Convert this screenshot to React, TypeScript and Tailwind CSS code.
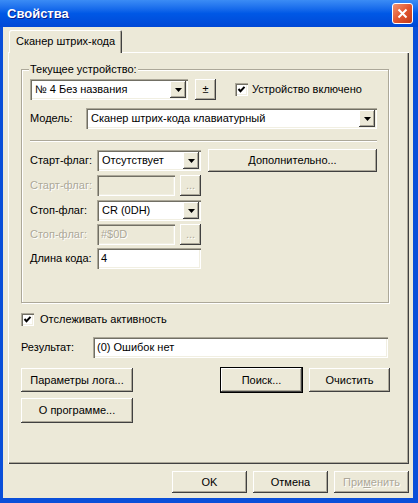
const raised =
  "bg-[#ece9d8] shadow-[inset_-1px_-1px_0_#404040,inset_1px_1px_0_#fff,inset_-2px_-2px_0_#aca899]";
const sunken =
  "shadow-[inset_1px_1px_0_#aca899,inset_2px_2px_0_#716f64,inset_-1px_-1px_0_#fff,inset_-2px_-2px_0_#f1efe2]";
const disabledText = "text-[#aca899] [text-shadow:1px_1px_0_#fff]";

function Arrow() {
  return (
    <div className={`ml-auto mr-[2px] w-[16px] h-[17px] flex items-center justify-center ${raised}`}>
      <svg width="7" height="4" viewBox="0 0 7 4">
        <path d="M0 0h7L3.5 4z" fill="#000" />
      </svg>
    </div>
  );
}

function Combo({ value, width }: { value: string; width: string }) {
  return (
    <div className={`${width} h-[21px] bg-white flex items-center pl-[5px] ${sunken}`}>
      <span className="leading-none">{value}</span>
      <Arrow />
    </div>
  );
}

function Field({ value, width, disabled }: { value: string; width: string; disabled?: boolean }) {
  return (
    <div
      className={`${width} h-[21px] flex items-center pl-[4px] ${sunken} ${
        disabled ? "bg-[#ece9d8] " + disabledText : "bg-white"
      }`}
    >
      {value}
    </div>
  );
}

function Button({
  children,
  width,
  height = "h-[23px]",
  isDefault,
  disabled,
}: {
  children: React.ReactNode;
  width: string;
  height?: string;
  isDefault?: boolean;
  disabled?: boolean;
}) {
  return (
    <div
      className={`${width} ${height} flex items-center justify-center ${raised} ${
        isDefault ? "outline outline-1 outline-black" : ""
      } ${disabled ? disabledText : ""}`}
    >
      {children}
    </div>
  );
}

function Check() {
  return (
    <div className={`w-[13px] h-[13px] bg-white flex items-center justify-center ${sunken}`}>
      <svg width="9" height="9" viewBox="0 0 9 9">
        <path d="M1.5 4l2 2.2L7.5 1.8" stroke="#000" strokeWidth="2" fill="none" />
      </svg>
    </div>
  );
}

export default function App() {
  return (
    <div className="w-[418px] h-[503px] flex flex-col bg-[#0a4fd9] font-['Liberation_Sans',Arial,sans-serif] text-[11px] text-black">
      {/* title bar */}
      <div className="h-[27px] flex items-center pl-[7px] pr-[5px] bg-gradient-to-b from-[#3b8cf5] via-[#0058e6] to-[#0048d6]">
        <span className="text-white font-bold text-[13px] [text-shadow:1px_1px_0_#0a1e8c]">Свойства</span>
        <div className="ml-auto w-[21px] h-[21px] rounded-[3px] border border-white bg-gradient-to-br from-[#f0926f] via-[#e2562f] to-[#c13a18] flex items-center justify-center">
          <svg width="11" height="11" viewBox="0 0 11 11">
            <path d="M1.5 1.5l8 8M9.5 1.5l-8 8" stroke="#fff" strokeWidth="2" />
          </svg>
        </div>
      </div>

      {/* body */}
      <div className="flex-1 ml-[3px] mr-[5px] mb-[5px] bg-[#ece9d8] flex flex-col">
        <div className="mt-[3px] ml-[6px] flex">
          <div className="relative z-10 w-[113px] h-[23px] -mb-[1px] bg-[#ece9d8] rounded-t-[2px] shadow-[inset_1px_1px_0_#fff,inset_-1px_0_0_#404040,inset_-2px_0_0_#aca899] flex items-center justify-center pb-[1px]">
            Сканер штрих-кода
          </div>
        </div>

        {/* tab panel */}
        <div className="ml-[5px] w-[401px] h-[412px] flex flex-col pl-[13px] shadow-[inset_1px_1px_0_#fff,inset_-1px_-1px_0_#404040,inset_-2px_-2px_0_#aca899]">
          {/* group box */}
          <div className="relative mt-[17px] w-[368px] h-[234px] border border-[#aca899] shadow-[1px_1px_0_#fff,inset_1px_1px_0_#fff] pl-[8px] pt-[9px] flex flex-col">
            <span className="absolute left-[7px] -top-[8px] px-[1px] bg-[#ece9d8] leading-[14px]">
              Текущее устройство:
            </span>

            <div className="flex items-center h-[21px]">
              <Combo value="№ 4 Без названия" width="w-[158px]" />
              <div className="ml-[7px]">
                <Button width="w-[21px]" height="h-[21px]">±</Button>
              </div>
              <div className="ml-[19px]">
                <Check />
              </div>
              <span className="ml-[4px]">Устройство включено</span>
            </div>

            <div className="mt-[8px] flex items-center h-[21px]">
              <span className="w-[56px]">Модель:</span>
              <Combo value="Сканер штрих-кода клавиатурный" width="w-[291px]" />
            </div>

            <div className="mt-[11px] w-[347px] border-t border-t-[#aca899] border-b border-b-white" />

            <div className="mt-[8px] flex items-center h-[21px]">
              <span className="w-[67px]">Старт-флаг:</span>
              <Combo value="Отсутствует" width="w-[104px]" />
              <div className="ml-[7px]">
                <Button width="w-[169px]">Дополнительно...</Button>
              </div>
            </div>

            <div className="mt-[4px] flex items-center h-[21px]">
              <span className={`w-[67px] ${disabledText}`}>Старт-флаг:</span>
              <Field value="" width="w-[78px]" disabled />
              <div className="ml-[5px]">
                <Button width="w-[21px]" height="h-[21px]" disabled>...</Button>
              </div>
            </div>

            <div className="mt-[4px] flex items-center h-[21px]">
              <span className="w-[67px]">Стоп-флаг:</span>
              <Combo value="CR (0DH)" width="w-[104px]" />
            </div>

            <div className="mt-[3px] flex items-center h-[21px]">
              <span className={`w-[67px] ${disabledText}`}>Стоп-флаг:</span>
              <Field value="#$0D" width="w-[78px]" disabled />
              <div className="ml-[5px]">
                <Button width="w-[21px]" height="h-[21px]" disabled>...</Button>
              </div>
            </div>

            <div className="mt-[3px] flex items-center h-[21px]">
              <span className="w-[67px]">Длина кода:</span>
              <Field value="4" width="w-[104px]" />
            </div>
          </div>

          <div className="mt-[10px] flex items-center h-[13px]">
            <Check />
            <span className="ml-[6px]">Отслеживать активность</span>
          </div>

          <div className="mt-[11px] flex items-center h-[21px]">
            <span className="w-[72px]">Результат:</span>
            <Field value="(0) Ошибок нет" width="w-[295px]" />
          </div>

          <div className="mt-[10px] flex items-center">
            <Button width="w-[112px]" height="h-[24px]">Параметры лога...</Button>
            <div className="ml-[88px]">
              <Button width="w-[81px]" height="h-[24px]" isDefault>Поиск...</Button>
            </div>
            <div className="ml-[7px]">
              <Button width="w-[81px]" height="h-[24px]">Очистить</Button>
            </div>
          </div>

          <div className="mt-[6px]">
            <Button width="w-[112px]" height="h-[25px]">О программе...</Button>
          </div>
        </div>

        <div className="mt-[7px] mr-[4px] self-end flex gap-[6px]">
          <Button width="w-[75px]" height="h-[22px]">OK</Button>
          <Button width="w-[75px]" height="h-[22px]">Отмена</Button>
          <Button width="w-[75px]" height="h-[22px]" disabled>
            <span>
              При<u>м</u>енить
            </span>
          </Button>
        </div>
      </div>
    </div>
  );
}
